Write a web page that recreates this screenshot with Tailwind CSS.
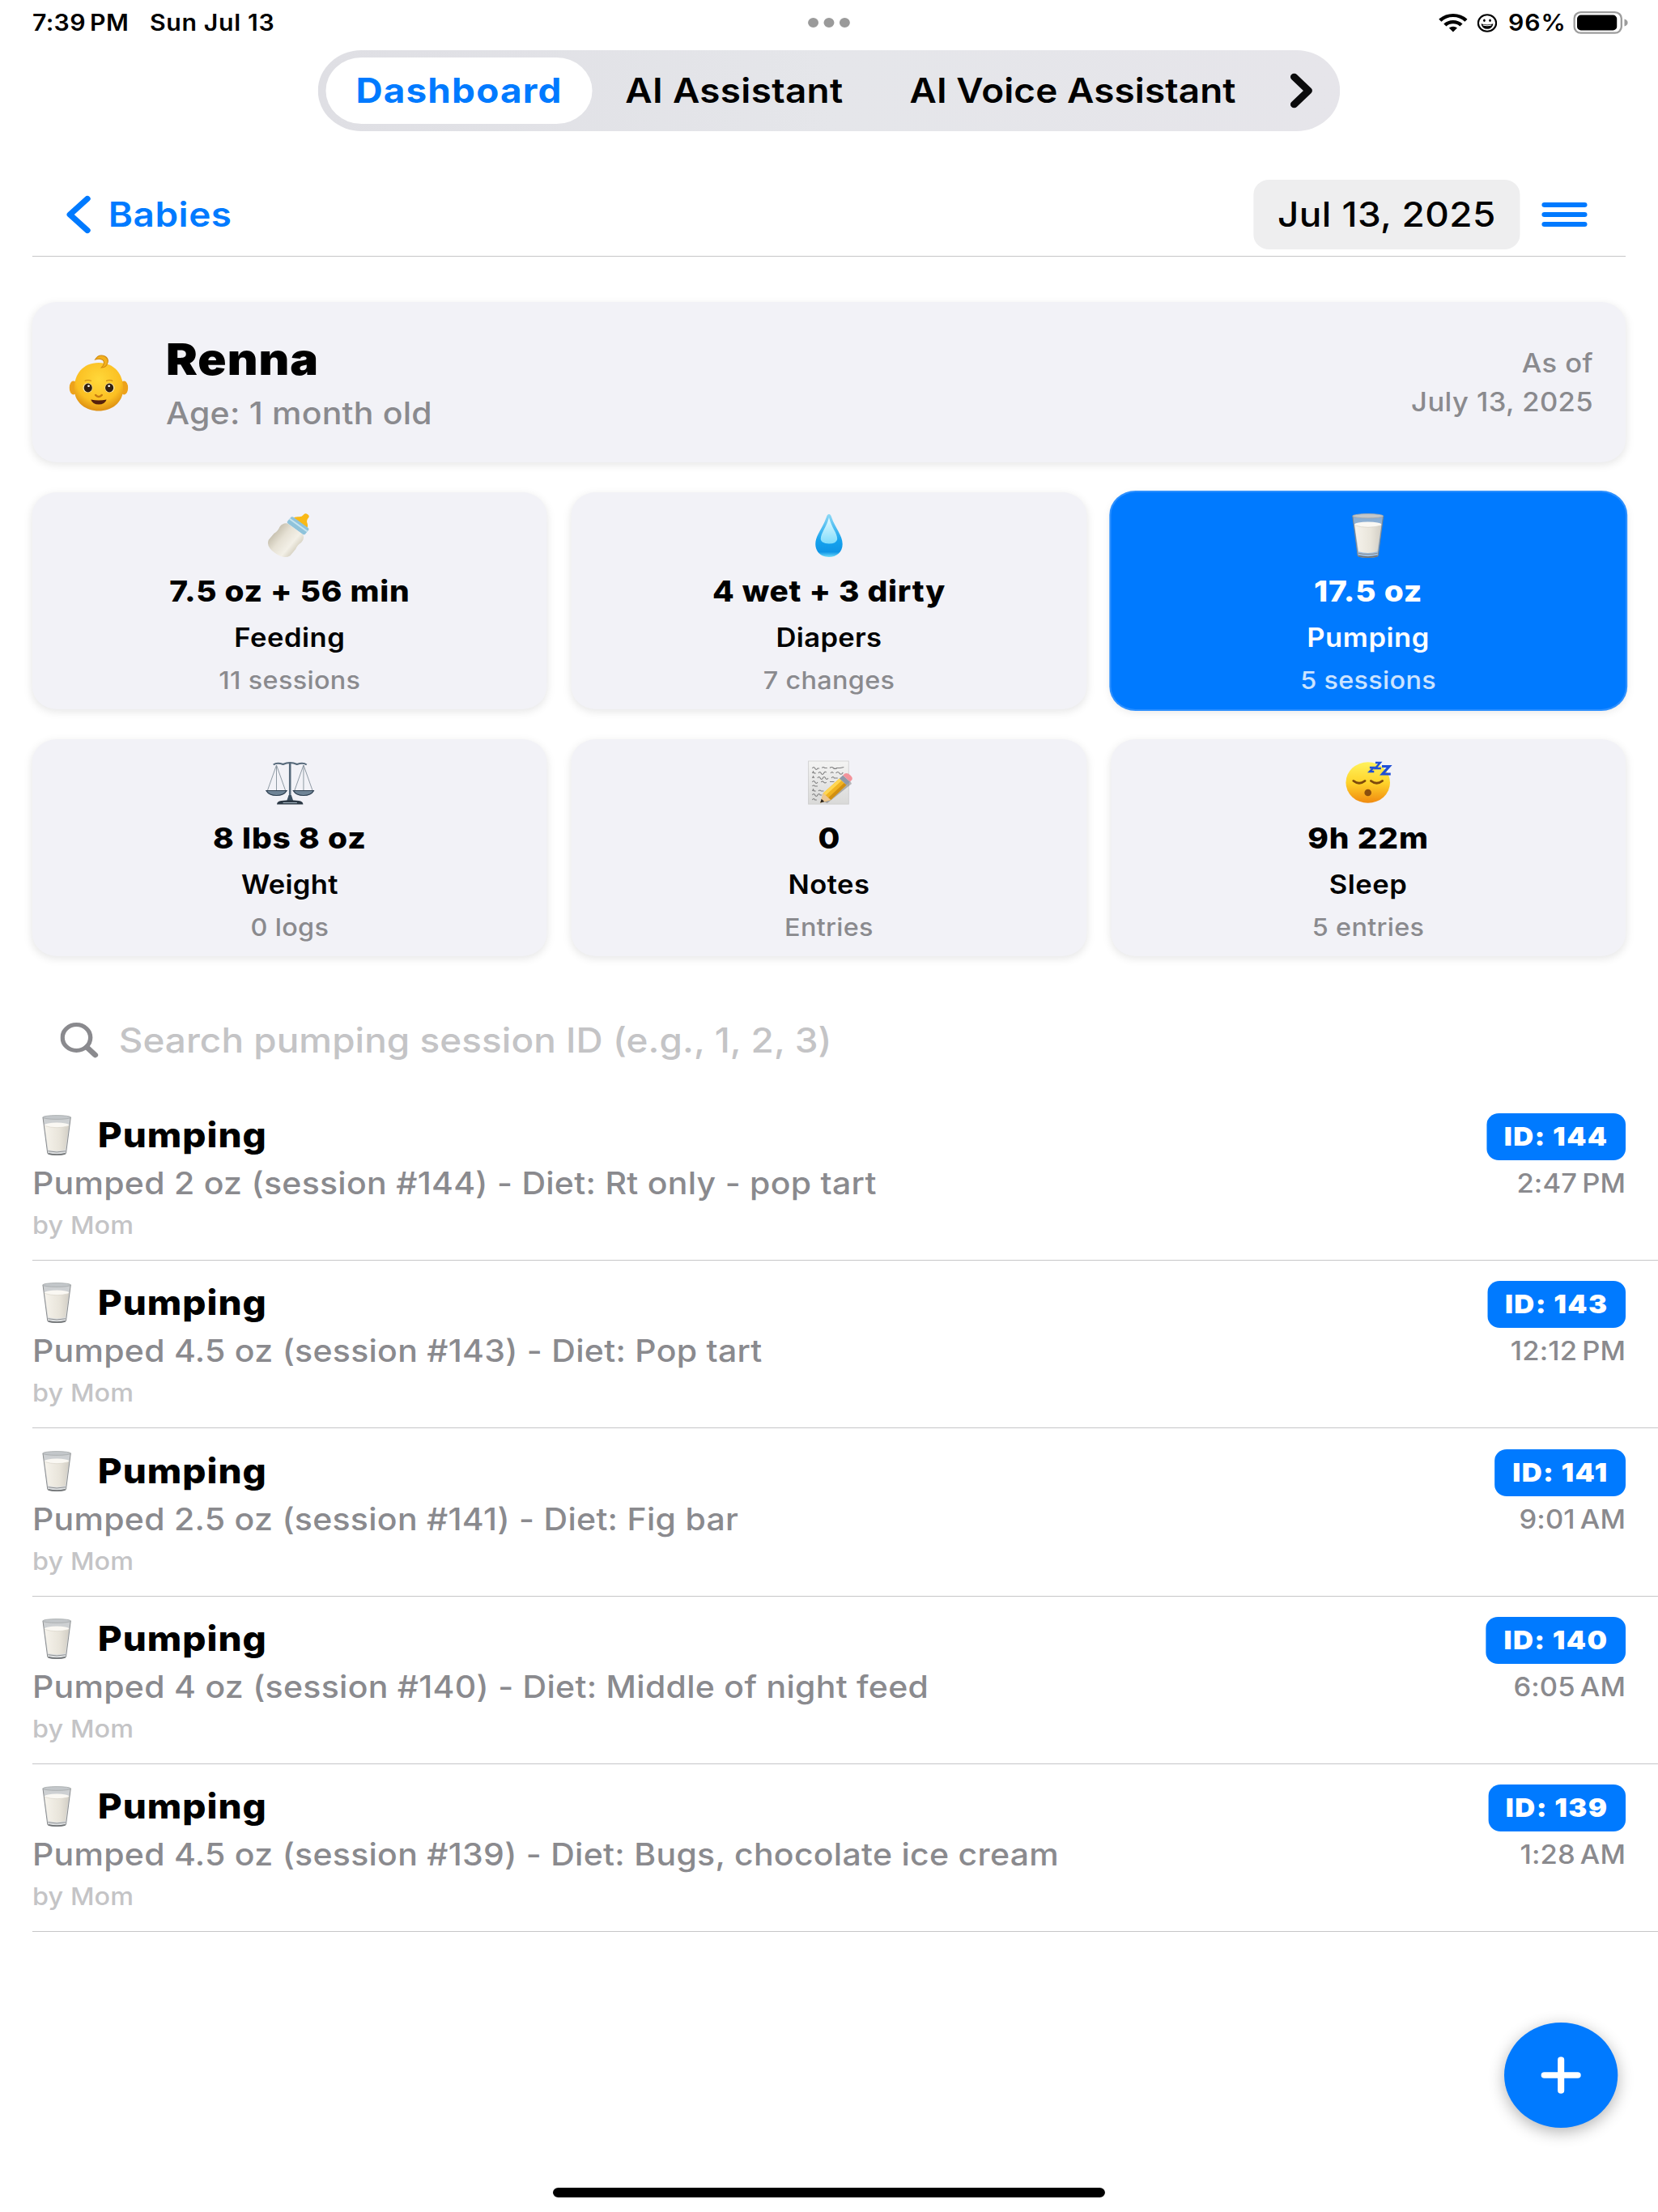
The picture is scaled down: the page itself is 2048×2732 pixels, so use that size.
<!DOCTYPE html>
<html lang="en">
    <head>
        <meta charset="UTF-8">
        <title>Baby Dashboard</title>
        <script src="https://cdn.jsdelivr.net/npm/@tailwindcss/browser@4"></script>
    </head>
    <body class="bg-white overflow-hidden">
        <!-- Shared emoji art -->
        <svg class="absolute w-0 h-0">
            <defs>
                <linearGradient id="milkBody" x1="0" y1="0" x2="1" y2="0">
                    <stop offset="0" stop-color="#f6f3ec"/>
                    <stop offset="0.6" stop-color="#e9e5db"/>
                    <stop offset="1" stop-color="#d2cec5"/>
                </linearGradient>
                <linearGradient id="glassTop" x1="0" y1="0" x2="0" y2="1">
                    <stop offset="0" stop-color="#b9bdc0"/>
                    <stop offset="1" stop-color="#d5d8da"/>
                </linearGradient>
                <linearGradient id="bottleBody" x1="0" y1="0" x2="1" y2="0">
                    <stop offset="0" stop-color="#c9c3b2"/>
                    <stop offset="0.35" stop-color="#e6e1d4"/>
                    <stop offset="0.75" stop-color="#f3f0e7"/>
                    <stop offset="1" stop-color="#dad5c6"/>
                </linearGradient>
                <radialGradient id="skin" cx="0.5" cy="0.35" r="0.65">
                    <stop offset="0" stop-color="#ffd83a"/>
                    <stop offset="0.7" stop-color="#fbbf22"/>
                    <stop offset="1" stop-color="#dd8f12"/>
                </radialGradient>
                <linearGradient id="sleepFace" x1="0" y1="0" x2="0" y2="1">
                    <stop offset="0" stop-color="#fff25c"/>
                    <stop offset="0.5" stop-color="#ffd42b"/>
                    <stop offset="1" stop-color="#f08a10"/>
                </linearGradient>
                <linearGradient id="drop" x1="0" y1="0" x2="0" y2="1">
                    <stop offset="0" stop-color="#8fd9f5"/>
                    <stop offset="0.6" stop-color="#16a3ee"/>
                    <stop offset="0.88" stop-color="#0f95e6"/>
                    <stop offset="1" stop-color="#6fdcfb"/>
                </linearGradient>
                <linearGradient id="dropShine" x1="0" y1="0" x2="0" y2="1">
                    <stop offset="0" stop-color="#e9fbff"/>
                    <stop offset="1" stop-color="#7fdcfb"/>
                </linearGradient>
                <linearGradient id="paper" x1="0" y1="0" x2="0" y2="1">
                    <stop offset="0" stop-color="#f4f4f3"/>
                    <stop offset="1" stop-color="#d9d9d8"/>
                </linearGradient>
            </defs>
            <symbol id="milk" viewBox="0 0 36 54">
                <path d="M0.8 3 L6.6 51 Q7 53.6 18 53.6 T29.4 51 L35.2 3Z" fill="url(#glassTop)" fill-opacity="0.75"/>
                <path d="M2.8 13.5 L7.4 46.5 Q18 49.5 28.6 46.5 L33.2 13.5Z" fill="url(#milkBody)"/>
                <ellipse cx="18" cy="13.5" rx="15.2" ry="3.2" fill="#faf8f3"/>
                <path d="M2.8 14.5 Q18 19.5 33.2 14.5" fill="none" stroke="#d9d5cb" stroke-width="0.7"/>
                <path d="M0.8 3 L6.6 51 Q7 53.4 18 53.4 T29.4 51 L35.2 3" fill="none" stroke="#85888a" stroke-width="1"/>
                <path d="M7.2 48.3 Q18 51 28.8 48.3" fill="none" stroke="#8b8e90" stroke-width="1"/>
                <path d="M7.4 51.6 Q18 54.4 28.6 51.6" fill="none" stroke="#6d7072" stroke-width="1.6"/>
                <ellipse cx="18" cy="3.2" rx="17.2" ry="2.6" fill="#c3c7ca" stroke="#a5a9ab" stroke-width="0.8"/>
            </symbol>
        </svg>

        <div class="relative w-[1898px] h-[2732px] origin-top-left scale-x-[1.079] flex flex-col font-['Inter',sans-serif] text-black">
            <!-- Status bar -->
            <div class="relative h-[62px] pt-[8px] pl-[37px] pr-[34px] flex justify-between items-start">
                <div class="h-10 flex items-center gap-[24px] text-[28px] leading-10 font-semibold whitespace-nowrap">
                    <span class="tracking-[0.3px]">7:39&#8239;PM</span>
                    <span class="tracking-[0.6px]">Sun Jul 13</span>
                </div>
                <div class="absolute left-[925px] top-[22px] flex gap-[6.5px]">
                    <span class="w-[11.5px] h-[11.5px] rounded-full bg-[#9a9a9a]"></span>
                    <span class="w-[11.5px] h-[11.5px] rounded-full bg-[#9a9a9a]"></span>
                    <span class="w-[11.5px] h-[11.5px] rounded-full bg-[#9a9a9a]"></span>
                </div>
                <div class="h-10 flex items-center">
                    <svg class="w-[33px] h-[24px] mr-[11px]" viewBox="0 0 33 24" fill="none" stroke="#000" stroke-width="4.2">
                        <path d="M1.6 9.2 A21 21 0 0 1 31.4 9.2"/>
                        <path d="M7.2 15 A13 13 0 0 1 25.8 15"/>
                        <path d="M11.8 18.6 A6.8 6.8 0 0 1 21.2 18.6 L16.5 23.6Z" fill="#000" stroke="none"/>
                    </svg>
                    <svg class="w-[23px] h-[23px] mr-[13px]" viewBox="0 0 23 23">
                        <circle cx="11.5" cy="11.5" r="10.3" fill="none" stroke="#000" stroke-width="2"/>
                        <ellipse cx="8.2" cy="8.2" rx="1.2" ry="1.8"/>
                        <ellipse cx="14.8" cy="8.2" rx="1.2" ry="1.8"/>
                        <path d="M4.6 12.2 Q11.5 14.6 18.4 12.2 Q17.4 18.8 11.5 18.8 T4.6 12.2Z"/>
                        <path d="M6.6 14 Q11.5 15.6 16.4 14" fill="none" stroke="#fff" stroke-width="1"/>
                    </svg>
                    <span class="mr-[8px] text-[28px] leading-10 tracking-[0.8px] font-semibold">96%</span>
                    <svg class="w-[63px] h-[28px]" viewBox="0 0 63 28">
                        <rect x="1.2" y="1.2" width="54" height="25.4" rx="7.5" fill="none" stroke="#9c9c9c" stroke-width="2.2"/>
                        <rect x="4.4" y="4.6" width="45.6" height="18.8" rx="4.4"/>
                        <path d="M58.6 9.4 Q62.4 10.6 62.4 14 T58.6 18.6Z" fill="#9c9c9c"/>
                    </svg>
                </div>
            </div>

            <!-- Tabs -->
            <div class="self-center w-[1170px] h-[100px] p-[9px] rounded-full bg-[#e5e5ea] bg-linear-to-r from-[#dfdfe4] via-[#e5e6ea] to-[#e6e5ea] flex items-center text-[42.5px] leading-[81px] font-semibold whitespace-nowrap">
                <div class="w-[305px] h-[82px] rounded-full bg-white text-[#007aff] text-center font-bold tracking-[1.1px]">Dashboard</div>
                <div class="w-[325px] pb-px text-center tracking-[0.3px]">AI Assistant</div>
                <div class="w-[450px] pb-px text-center tracking-[0.1px]">AI Voice Assistant</div>
                <svg class="w-[30px] h-[44px] ml-[22px]" viewBox="0 0 30 44" fill="none" stroke="#0b0b0c" stroke-width="8.5" stroke-linecap="round" stroke-linejoin="round">
                    <path d="M6.5 5 L23 22 L6.5 39"/>
                </svg>
            </div>

            <!-- Nav bar -->
            <div class="mx-[37px] mt-[54px] h-[101px] border-b border-[#c6c6c8] flex items-start justify-between text-[42.5px] leading-[86px] font-medium whitespace-nowrap">
                <div class="mt-[6px] pl-[38px] flex items-center gap-[19px] text-[#007aff]">
                    <svg class="w-[30px] h-[48px]" viewBox="0 0 30 48" fill="none" stroke="#007aff" stroke-width="7" stroke-linecap="round" stroke-linejoin="round">
                        <path d="M25 4.5 L5 24 L25 43.5"/>
                    </svg>
                    <span class="font-semibold tracking-[0.5px]">Babies</span>
                </div>
                <div class="mt-[6px] pr-[44px] flex items-center gap-[25px]">
                    <div class="w-[305px] h-[86px] rounded-[18px] bg-[#eeeeef] text-center tracking-[0.4px]">Jul 13, 2025</div>
                    <div class="w-[52px] flex flex-col gap-[6px]">
                        <span class="h-[6px] rounded-full bg-[#007aff]"></span>
                        <span class="h-[6px] rounded-full bg-[#007aff]"></span>
                        <span class="h-[6px] rounded-full bg-[#007aff]"></span>
                    </div>
                </div>
            </div>

            <!-- Baby card -->
            <div class="mx-[37px] mt-[56px] h-[198px] pl-[42px] pr-[37px] rounded-[28px] bg-[#f2f2f7] shadow-[0_3px_10px_rgba(0,0,0,0.1)] flex">
                <svg class="w-[68px] h-[70px] mt-[65px]" viewBox="0 0 68 70">
                    <ellipse cx="5" cy="41" rx="4.6" ry="8.5" fill="#eda21b"/>
                    <ellipse cx="63" cy="41" rx="4.6" ry="8.5" fill="#eda21b"/>
                    <path d="M34 10 C52 10 62 24 62 42 C62 60 48 69.5 34 69.5 C20 69.5 6 60 6 42 C6 24 16 10 34 10Z" fill="url(#skin)"/>
                    <path d="M30 6 Q34 -1 41 2 Q47 6 43 13 Q41 16 37 16 Q42 11 39 7 Q36 4 30 6Z" fill="#f2b01e" stroke="#d08a10" stroke-width="1"/>
                    <ellipse cx="21.5" cy="41" rx="5.6" ry="6" fill="#fbe9b0"/>
                    <ellipse cx="46.5" cy="41" rx="5.6" ry="6" fill="#fbe9b0"/>
                    <ellipse cx="21.8" cy="41" rx="4.7" ry="5.4" fill="#33200f"/>
                    <ellipse cx="46.2" cy="41" rx="4.7" ry="5.4" fill="#33200f"/>
                    <circle cx="22.5" cy="38.8" r="1.3" fill="#fff"/>
                    <circle cx="45.8" cy="38.8" r="1.3" fill="#fff"/>
                    <path d="M18 32.5 Q21.5 30.5 25.5 32.5 M42.5 32.5 Q46.5 30.5 50 32.5" fill="none" stroke="#c98512" stroke-width="1.2"/>
                    <path d="M30.5 50 Q34 54 37.5 50" fill="none" stroke="#c47a12" stroke-width="2.4" stroke-linecap="round"/>
                    <path d="M25 55.5 Q34 57.5 43 55.5 Q41 61.5 34 61.5 T25 55.5Z" fill="#55200c"/>
                </svg>
                <div class="ml-[43px] mt-[40px]">
                    <div class="text-[54px] leading-[62px] font-black tracking-[0.9px]">Renna</div>
                    <div class="mt-[12px] text-[38px] leading-[46px] tracking-[0.2px] font-medium text-[#8a8a8e]">Age: 1 month old</div>
                </div>
                <div class="ml-auto mt-[52px] text-right text-[32px] leading-[48px] tracking-[0.4px] font-medium text-[#8a8a8e]">
                    <div>As of</div>
                    <div>July 13, 2025</div>
                </div>
            </div>

            <!-- Stats -->
            <div class="mx-[37px] mt-[37px] grid grid-cols-3 gap-x-[28px] gap-y-[37px] text-center">
                <div class="h-[268px] pt-[25px] rounded-[28px] bg-[#f2f2f7] shadow-[0_3px_10px_rgba(0,0,0,0.1)] flex flex-col items-center">
                    <svg class="w-14 h-14" viewBox="0 0 56 56">
                        <g transform="rotate(38 28 28) translate(28 26.5) scale(1.12 0.92) translate(-28 -28)">
                            <path d="M28 -6 Q31.5 -6 31 -2 Q31 1 33 3 Q37 6 37 10 L19 10 Q19 6 23 3 Q25 1 25 -2 Q24.500 -6 28 -6Z" fill="#f9b916"/>
                            <rect x="16.5" y="8" width="23" height="11" rx="2.5" fill="#8fc3db"/>
                            <rect x="16.5" y="11.5" width="23" height="2" fill="#c6e4f0"/>
                            <path d="M18 19 L38 19 Q42.5 22 42 29 Q40.5 34 42 40 L42 51 Q40 60 28 60 T14 51 L14 40 Q15.5 34 14 29 Q13.5 22 18 19Z" fill="url(#bottleBody)"/>
                        </g>
                    </svg>
                    <div class="mt-[19px] text-[36px] leading-[44px] tracking-[0.7px] font-extrabold">7.5 oz + 56 min</div>
                    <div class="mt-[16px] text-[32px] leading-[40px] tracking-[0.5px] font-semibold">Feeding</div>
                    <div class="mt-[13px] text-[30px] leading-[38px] tracking-[0.3px] font-medium text-[#8a8a8e]">11 sessions</div>
                </div>
                <div class="h-[268px] pt-[25px] rounded-[28px] bg-[#f2f2f7] shadow-[0_3px_10px_rgba(0,0,0,0.1)] flex flex-col items-center">
                    <svg class="w-14 h-14" viewBox="0 0 56 56">
                        <path d="M28 2 Q30 2 31 6 C35 19 43.5 28 43.5 39 C43.5 49 36.5 55 28 55 S12.5 49 12.5 39 C12.5 28 21 19 25 6 Q26 2 28 2Z" fill="url(#drop)"/>
                        <path d="M28 6 C31 19 37.5 25 37.5 33 Q36.5 38.5 28 38.5 T18.5 33 C18.5 25 25 19 28 6Z" fill="url(#dropShine)"/>
                    </svg>
                    <div class="mt-[19px] text-[36px] leading-[44px] tracking-[0.7px] font-extrabold">4 wet + 3 dirty</div>
                    <div class="mt-[16px] text-[32px] leading-[40px] tracking-[0.3px] font-semibold">Diapers</div>
                    <div class="mt-[13px] text-[30px] leading-[38px] tracking-[0.3px] font-medium text-[#8a8a8e]">7 changes</div>
                </div>
                <div class="h-[268px] pt-[25px] rounded-[28px] bg-[#007aff] text-white ring-2 ring-[#2b8fff] shadow-[0_3px_10px_rgba(0,0,0,0.1)] flex flex-col items-center">
                    <svg class="w-14 h-14" viewBox="0 0 56 56"><use href="#milk" x="9.5" y="1" width="37" height="55"/></svg>
                    <div class="mt-[19px] text-[36px] leading-[44px] tracking-[0.8px] font-extrabold">17.5 oz</div>
                    <div class="mt-[16px] text-[32px] leading-[40px] tracking-[0.5px] font-semibold">Pumping</div>
                    <div class="mt-[13px] text-[30px] leading-[38px] tracking-[0.3px] font-medium text-white/80">5 sessions</div>
                </div>
                <div class="h-[268px] pt-[25px] rounded-[28px] bg-[#f2f2f7] shadow-[0_3px_10px_rgba(0,0,0,0.1)] flex flex-col items-center">
                    <svg class="w-14 h-14" viewBox="0 0 56 56" fill="none" stroke="#56697a">
                        <path d="M9 6.5 Q13 3.5 20 6 Q28 2 36 6 Q43 3.5 47 6.5" stroke-width="2"/>
                        <path d="M28 4 V48" stroke-width="2.4"/>
                        <path d="M12.5 7 L2 39 M12.5 7 V39 M12.5 7 L23 39 M43.5 7 L33 39 M43.5 7 V39 M43.5 7 L54 39" stroke="#87939d" stroke-width="0.9"/>
                        <path d="M0.8 38.5 H24.2 Q21 44.5 12.5 44.5 T0.8 38.5Z M31.8 38.5 H55.2 Q52 44.5 43.5 44.5 T31.8 38.5Z" fill="#6f8496" stroke="#2f4152" stroke-width="1.2"/>
                        <path d="M26.5 44 L24 52 H32 L29.5 44Z" fill="#3c5061" stroke="none"/>
                        <path d="M13 55.5 Q13 51.5 18 51 Q28 49.5 38 51 Q43 51.5 43 55.5Z" fill="#2c3945" stroke="none"/>
                        <path d="M20 53.5 H36" stroke="#a9bac6" stroke-width="1.2"/>
                    </svg>
                    <div class="mt-[19px] text-[36px] leading-[44px] tracking-[0.8px] font-extrabold">8 lbs 8 oz</div>
                    <div class="mt-[16px] text-[32px] leading-[40px] tracking-[0.3px] font-semibold">Weight</div>
                    <div class="mt-[13px] text-[30px] leading-[38px] tracking-[0.3px] font-medium text-[#8a8a8e]">0 logs</div>
                </div>
                <div class="h-[268px] pt-[25px] rounded-[28px] bg-[#f2f2f7] shadow-[0_3px_10px_rgba(0,0,0,0.1)] flex flex-col items-center">
                    <svg class="w-14 h-14" viewBox="0 0 56 56">
                        <rect x="4" y="1.5" width="47" height="54" fill="url(#paper)"/>
                        <rect x="4.5" y="2" width="46" height="53" fill="none" stroke="#cfcfd0" stroke-width="0.8"/>
                        <g fill="none" stroke="#808081" stroke-width="1.1">
                            <path d="M9 11 q1.5 -3 3 0 t3 0 h2 M20 10.5 q1.5 -2 3 0 h3 M29 10.5 q2 -2 4 0 t4 0 h4 l4 -1"/>
                            <path d="M9 17 l1 -2 l1 2 h2 M16 17 q1.5 -3 3 0 t3 0 t3 -1 M30 17 q1.5 -3 3 0 M36 17 q2 -3 4 0 t4 -1"/>
                            <path d="M9 23 l1 -2 l1 2 M15 23 q1.5 -3 3 0 t3 0 t3 0 t3 0 M31 23 q1.5 -3 3 0 h4"/>
                            <path d="M9 28 q1.5 -3 3 0 t3 0 M19 28 q1.5 -2 3 0 t3 0 M29 27.5 h5"/>
                            <path d="M9 33 q1.5 -2 3 0 h3"/>
                            <path d="M9 39 l1 -2 l1 2 h2 M16 39 q1.5 -2 3 0 h3"/>
                            <path d="M9 44 q1.5 -3 3 0 t3 0 t3 0 h2"/>
                            <path d="M9 50 q1.5 -3 3 0 h2"/>
                        </g>
                        <path d="M22 52 L52 26 L54 30 L26 54Z" fill="#000" fill-opacity="0.25"/>
                        <path d="M18 53.5 L21.5 41.5 L40 23.5 L48 31.5 L30 50Z" fill="#f0b321"/>
                        <path d="M21.5 41.5 L40 23.5 L42.6 26 L24.2 44.2Z" fill="#ffd653"/>
                        <path d="M27 47.4 L45.5 29 L48 31.5 L30 50Z" fill="#d18f12"/>
                        <path d="M18 53.5 L21.5 41.5 L30 50Z" fill="#ecc793"/>
                        <path d="M18 53.5 L19.4 48.8 L22.8 52.2Z" fill="#2a2420"/>
                        <path d="M40 23.5 L44 19.5 L52 27.5 L48 31.5Z" fill="#8f99a8"/>
                        <path d="M44 19.5 L46 17.5 Q49 16 52.5 19.5 T54 25.5 L52 27.5Z" fill="#f3939b"/>
                    </svg>
                    <div class="mt-[19px] text-[36px] leading-[44px] font-extrabold">0</div>
                    <div class="mt-[16px] text-[32px] leading-[40px] tracking-[0.5px] font-semibold">Notes</div>
                    <div class="mt-[13px] text-[30px] leading-[38px] tracking-[0.3px] font-medium text-[#8a8a8e]">Entries</div>
                </div>
                <div class="h-[268px] pt-[25px] rounded-[28px] bg-[#f2f2f7] shadow-[0_3px_10px_rgba(0,0,0,0.1)] flex flex-col items-center">
                    <svg class="w-14 h-14" viewBox="0 0 56 56">
                        <circle cx="28" cy="28.5" r="25.3" fill="url(#sleepFace)"/>
                        <path d="M11.5 26.5 Q18 32 24.5 26.5 M31.5 26.5 Q38 32 44.5 26.5" fill="none" stroke="#7d4a0c" stroke-width="2.8" stroke-linecap="round"/>
                        <ellipse cx="28" cy="41" rx="4" ry="4.3" fill="#8a4f0e"/>
                        <g fill="none" stroke="#1f4fd6" stroke-width="2.4">
                            <path d="M30 10 H34.5 L30 15 H35"/>
                            <path d="M36.5 4 H42 L36.5 11 H43"/>
                            <path d="M44 8.5 H52.5 L44.5 18 H54" stroke-width="3"/>
                        </g>
                    </svg>
                    <div class="mt-[19px] text-[36px] leading-[44px] tracking-[0.8px] font-extrabold">9h 22m</div>
                    <div class="mt-[16px] text-[32px] leading-[40px] tracking-[0.5px] font-semibold">Sleep</div>
                    <div class="mt-[13px] text-[30px] leading-[38px] tracking-[0.3px] font-medium text-[#8a8a8e]">5 entries</div>
                </div>
            </div>

            <!-- Search -->
            <div class="h-[168.75px] pl-[69px] pt-[39px] flex items-center gap-[23px]">
                <svg class="w-[44px] h-[44px]" viewBox="0 0 44 44" fill="none" stroke="#8a8a8e" stroke-linecap="round">
                    <circle cx="18.5" cy="18.5" r="16" stroke-width="5"/>
                    <path d="M30.5 30.5 L40 40" stroke-width="6.5"/>
                </svg>
                <div class="text-[42.5px] tracking-[0.05px] font-medium text-[#c4c4c6] whitespace-nowrap">Search pumping session ID (e.g., 1, 2, 3)</div>
            </div>

            <!-- Sessions -->
            <div id="sessions" class="ml-[37px] flex flex-col"></div>

            <!-- Add button -->
            <div class="absolute left-[1722px] top-[2498px] w-[130px] h-[130px] rounded-full bg-[#007aff] shadow-[0_5px_18px_rgba(0,0,0,0.3)] flex items-center justify-center">
                <svg class="w-[48px] h-[48px]" viewBox="0 0 48 48" fill="none" stroke="#fff" stroke-width="7.5" stroke-linecap="round">
                    <path d="M24 5 V43 M5 24 H43"/>
                </svg>
            </div>

            <!-- Home indicator -->
            <div class="absolute left-[633px] bottom-[18px] w-[632px] h-[12px] rounded-full bg-black"></div>
        </div>

        <script>
            const sessions = [
                { id: 144, text: "Pumped 2 oz (session #144) - Diet: Rt only - pop tart", time: "2:47\u202fPM" },
                { id: 143, text: "Pumped 4.5 oz (session #143) - Diet: Pop tart", time: "12:12\u202fPM" },
                { id: 141, text: "Pumped 2.5 oz (session #141) - Diet: Fig bar", time: "9:01\u202fAM" },
                { id: 140, text: "Pumped 4 oz (session #140) - Diet: Middle of night feed", time: "6:05\u202fAM" },
                { id: 139, text: "Pumped 4.5 oz (session #139) - Diet: Bugs, chocolate ice cream", time: "1:28\u202fAM" },
            ];
            document.getElementById("sessions").innerHTML = sessions.map(s => `
                <div class="h-[207.25px] pt-[25.25px] pr-[37px] border-b border-[#c6c6c8] flex justify-between whitespace-nowrap">
                    <div>
                        <div class="h-[54px] flex items-center">
                            <svg class="w-[34px] h-[50px] ml-[11px] mr-[30px]"><use href="#milk"/></svg>
                            <span class="text-[42.5px] leading-[54px] tracking-[0.9px] font-extrabold">Pumping</span>
                        </div>
                        <div class="mt-[8px] text-[38px] leading-[48px] tracking-[0.26px] font-medium text-[#8a8a8e]">${s.text}</div>
                        <div class="mt-[8px] text-[30px] leading-[40px] tracking-[0.1px] font-medium text-[#c4c4c6]">by Mom</div>
                    </div>
                    <div class="flex flex-col items-end">
                        <div class="h-[58px] px-[20px] rounded-[14px] bg-[#007aff] text-white text-[32px] leading-[58px] tracking-[1.3px] font-black">ID: ${s.id}</div>
                        <div class="mt-[9px] text-[32px] leading-[40px] tracking-[0.1px] font-medium text-[#8a8a8e]">${s.time}</div>
                    </div>
                </div>`).join("");
        </script>
    </body>
</html>
